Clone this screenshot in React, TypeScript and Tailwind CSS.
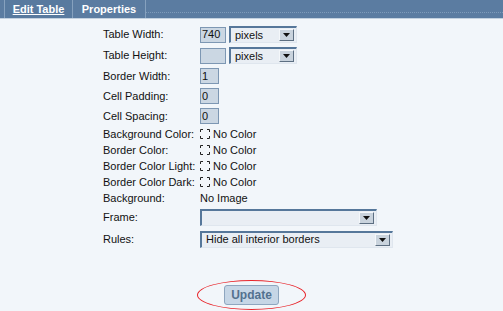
import React from "react";

const font = { fontFamily: '"Liberation Sans", Arial, sans-serif' };

function NoColor() {
  return (
    <div className="flex items-center gap-[3px]">
      <svg width="10" height="10" viewBox="0 0 10 10" className="shrink-0">
        <path
          d="M0.5 3V0.5H3M7 0.5H9.5V3M9.5 7V9.5H7M3 9.5H0.5V7"
          fill="none"
          stroke="#222"
          strokeWidth="1"
        />
      </svg>
      <span>No Color</span>
    </div>
  );
}

function SelectBox({ width, value }: { width: string; value: string }) {
  return (
    <div
      className={`flex h-[17px] items-center justify-between border-t-2 border-l-2 border-t-[#56779a] border-l-[#56779a] border-r border-b border-r-[#dfe6ee] border-b-[#dfe6ee] bg-[#e9eef4] pl-[4px] pr-[2px] ${width}`}
    >
      <span className="leading-none">{value}</span>
      <div className="flex h-[12px] w-[15px] items-center justify-center border border-t-[#f4f7fa] border-l-[#f4f7fa] border-r-[#5d6f82] border-b-[#5d6f82] bg-[#c9d3dd]">
        <svg width="7" height="4" viewBox="0 0 7 4">
          <path d="M0 0H7L3.5 4Z" fill="#111" />
        </svg>
      </div>
    </div>
  );
}

function TextBox({ width, value }: { width: string; value?: string }) {
  return (
    <div
      className={`flex h-[16px] items-center border border-[#7d97b3] bg-[#cbd7e3] pl-[1px] leading-none ${width}`}
    >
      {value}
    </div>
  );
}

export default function App() {
  const rows: { label: string; h: string; field: React.ReactNode }[] = [
    {
      label: "Table Width:",
      h: "h-[21px]",
      field: (
        <div className="flex items-center gap-[3px]">
          <TextBox width="w-[26px]" value="740" />
          <SelectBox width="w-[68px]" value="pixels" />
        </div>
      ),
    },
    {
      label: "Table Height:",
      h: "h-[21px]",
      field: (
        <div className="flex items-center gap-[3px]">
          <TextBox width="w-[26px]" />
          <SelectBox width="w-[68px]" value="pixels" />
        </div>
      ),
    },
    { label: "Border Width:", h: "h-[20px]", field: <TextBox width="w-[19px]" value="1" /> },
    { label: "Cell Padding:", h: "h-[20px]", field: <TextBox width="w-[19px]" value="0" /> },
    { label: "Cell Spacing:", h: "h-[20px]", field: <TextBox width="w-[19px]" value="0" /> },
    { label: "Background Color:", h: "h-[16px]", field: <NoColor /> },
    { label: "Border Color:", h: "h-[16px]", field: <NoColor /> },
    { label: "Border Color Light:", h: "h-[16px]", field: <NoColor /> },
    { label: "Border Color Dark:", h: "h-[16px]", field: <NoColor /> },
    { label: "Background:", h: "h-[16px]", field: <span>No Image</span> },
    { label: "Frame:", h: "h-[22px]", field: <SelectBox width="w-[177px]" value="" /> },
    {
      label: "Rules:",
      h: "h-[22px]",
      field: <SelectBox width="w-[193px]" value="Hide all interior borders" />,
    },
  ];

  return (
    <div className="h-[311px] w-[503px] overflow-hidden bg-[#f2f6fa] text-[11px] text-[#111]" style={font}>
      <div className="flex h-[19px] border-b border-b-[#c3d1df] bg-[#5b7ca1] pl-[4px]">
        <div className="flex w-[69px] items-center justify-center border-x border-x-[#86a1be] bg-[#587a9f] pt-[1px]">
          <span className="font-bold text-white underline">Edit Table</span>
        </div>
        <div className="flex w-[73px] items-center justify-center border-r border-r-[#86a1be] pt-[1px]">
          <span className="font-bold text-white">Properties</span>
        </div>
        <div className="mt-[12px] h-0 flex-1 border-t border-dotted border-t-[#7e9bba]" />
      </div>

      <div className="pl-[103px] pt-[5px]">
        {rows.map((r) => (
          <div key={r.label} className={`flex items-center ${r.h}`}>
            <div className="w-[97px] shrink-0">{r.label}</div>
            {r.field}
          </div>
        ))}
      </div>

      <div className="mt-[30px] flex justify-center">
        <div className="relative flex h-[30px] w-[109px] items-center justify-center">
          <div className="absolute inset-0 rounded-[50%] border border-[#e8242a]" />
          <div className="flex h-[20px] w-[55px] items-center justify-center rounded-[3px] border border-[#8ea6bf] bg-[#c6d6e6] text-[12px] font-bold text-[#53718f]">
            Update
          </div>
        </div>
      </div>
    </div>
  );
}
